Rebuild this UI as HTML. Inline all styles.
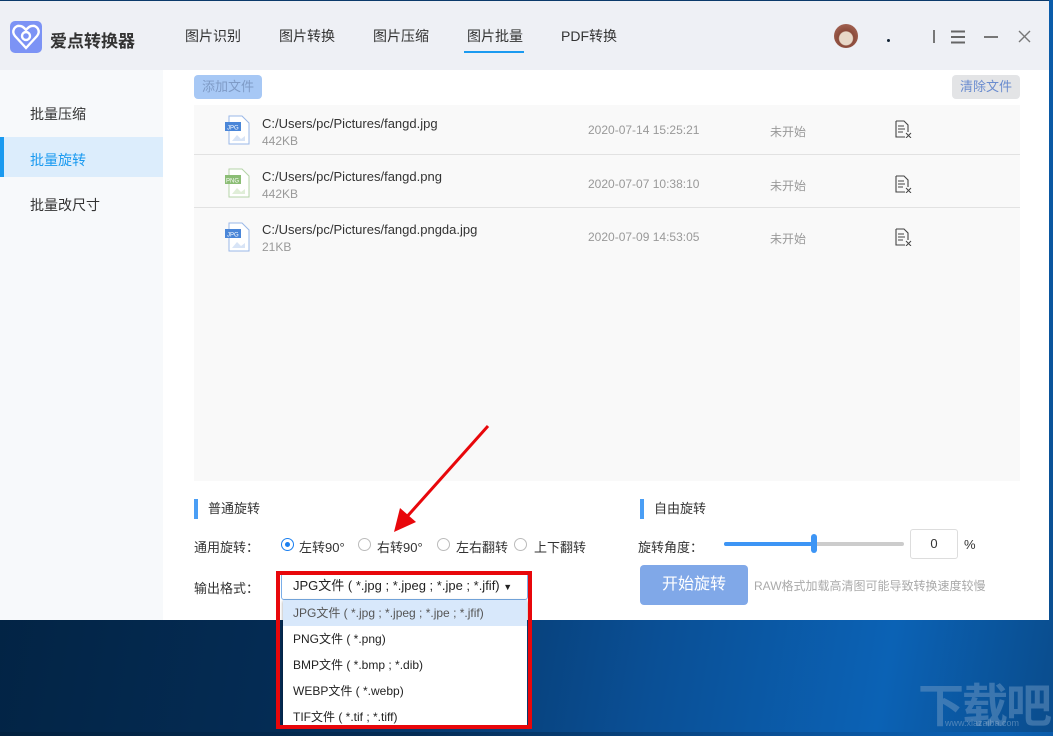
<!DOCTYPE html>
<html><head><meta charset="utf-8"><style>
*{margin:0;padding:0;box-sizing:border-box}
body{width:1053px;height:732px;overflow:hidden;position:relative;font-family:"Liberation Sans","Noto Sans CJK SC",sans-serif;font-size:13px;color:#333;
background:linear-gradient(100deg,#02213f 0%,#042c55 35%,#0a4f95 65%,#0b62b5 85%,#0a4c8c 100%)}
.app{position:absolute;left:0;top:0;width:1049px;height:620px;background:#fff}
.hdr{position:absolute;left:0;top:0;width:1049px;height:70px;background:#eef0f5;border-top:1px solid #0b3a6b}
.logo{position:absolute;left:10px;top:20px;width:32px;height:32px;border-radius:5px;background:#7c93f5}
.brand{position:absolute;left:50px;top:26px;font-size:17px;font-weight:bold;color:#333}
.tab{position:absolute;top:25px;font-size:14px;color:#333}
.tabline{position:absolute;left:464px;top:50px;width:60px;height:2px;background:#1a9af0}
.side{position:absolute;left:0;top:70px;width:163px;height:550px;background:#f7f9fb}
.si{position:absolute;left:30px;font-size:14px;color:#333}
.sel{position:absolute;left:0;top:67px;width:163px;height:40px;background:#dcedfc;border-left:4px solid #1a9af0}
.btn1{position:absolute;left:194px;top:75px;width:68px;height:24px;border-radius:4px;background:#a7c8f5;color:#7f9bc6;font-size:13px;text-align:center;line-height:24px}
.btn2{position:absolute;left:952px;top:75px;width:68px;height:24px;border-radius:4px;background:#e3e4e6;color:#6a8ccf;font-size:13px;text-align:center;line-height:24px}
.list{position:absolute;left:194px;top:105px;width:826px;height:376px;background:#f9f9f9}
.row{position:absolute;left:0;width:826px;height:50px;border-bottom:1px solid #e2e2e2}
.ic{position:absolute;left:30px;top:10px}
.fn{position:absolute;left:68px;top:11px;font-size:13px;color:#333}
.sz{position:absolute;left:68px;top:29px;font-size:12px;color:#999}
.dt{position:absolute;left:394px;top:18px;font-size:12px;color:#999}
.st{position:absolute;left:576px;top:18px;font-size:12px;color:#999}
.dl{position:absolute;left:700px;top:15px}
.sec{position:absolute;font-size:13px;color:#333;padding-left:10px;border-left:4px solid #4a9ef5;line-height:20px}
.lab{position:absolute;font-size:13px;color:#333}
.rad{position:absolute;width:13px;height:13px;border-radius:50%;border:1px solid #bbb;background:#fff}
.rad.on{border-color:#1a7ff0}
.rad.on::after{content:"";position:absolute;left:3px;top:3px;width:5px;height:5px;border-radius:50%;background:#1a7ff0}
.dd{position:absolute;left:276px;top:571px;width:256px;height:158px;border:4px solid #e8070b}
.sel2{position:absolute;left:281px;top:572px;width:247px;height:28px;border:1px solid #7aaee8;border-radius:3px;background:#fff;font-size:13px;line-height:26px;padding-left:11px;color:#222}
.menu{position:absolute;left:283px;top:600px;width:244px;height:125px;background:#fff;box-shadow:0 1px 3px rgba(0,0,0,.4)}
.mi{height:26px;line-height:26px;padding-left:10px;font-size:12px;color:#222}
</style></head><body>
<div class="app">
<div class="hdr">
 <div class="logo"><svg width="32" height="32" viewBox="0 0 32 32"><path d="M16 27 L5 15 C1 10 5 4 10 5 C13 5 15 8 16 9 C17 8 19 5 22 5 C27 4 31 10 27 15 Z" fill="none" stroke="#fff" stroke-width="2.4"/><circle cx="16" cy="15" r="4" fill="none" stroke="#fff" stroke-width="2.4"/></svg></div>
 <div class="brand">爱点转换器</div>
 <div class="tab" style="left:185px">图片识别</div>
 <div class="tab" style="left:279px">图片转换</div>
 <div class="tab" style="left:373px">图片压缩</div>
 <div class="tab" style="left:467px">图片批量</div>
 <div class="tab" style="left:561px">PDF转换</div>
 <div class="tabline"></div>
 <div style="position:absolute;left:834px;top:23px;width:24px;height:24px;border-radius:50%;background:radial-gradient(circle at 50% 60%,#e8d8c8 0 35%,#8a4a3a 40%,#b07060 100%)"></div>
 <div style="position:absolute;left:887px;top:38px;width:3px;height:3px;border-radius:50%;background:#123"></div>
 <div style="position:absolute;left:933px;top:29px;width:2px;height:13px;background:#777"></div>
 <svg style="position:absolute;left:950px;top:29px" width="16" height="14"><path d="M1 1.5H15M1 7H15M1 12.5H15" stroke="#666" stroke-width="2"/></svg>
 <div style="position:absolute;left:984px;top:35px;width:14px;height:2px;background:#777"></div>
 <svg style="position:absolute;left:1018px;top:29px" width="13" height="13"><path d="M1 1L12 12M12 1L1 12" stroke="#777" stroke-width="1.4"/></svg>
</div>
<div class="side">
 <div class="sel"></div>
 <div class="si" style="top:34px">批量压缩</div>
 <div class="si" style="top:80px;color:#1a9af0">批量旋转</div>
 <div class="si" style="top:125px">批量改尺寸</div>
</div>
<div class="btn1">添加文件</div>
<div class="btn2">清除文件</div>
<div class="list">
 <div class="row" style="top:0">
  <svg class="ic" width="26" height="30"><path d="M5 1H18L25 8V29H5Z" fill="#fff" stroke="#9ab8e8"/><rect x="1" y="7" width="16" height="9" fill="#4a86d8"/><text x="3" y="14.5" font-size="6" fill="#fff" font-family="Liberation Sans">JPG</text><path d="M8 26L13 20L17 24L21 21V26Z" fill="#d8e4f6"/></svg>
  <div class="fn">C:/Users/pc/Pictures/fangd.jpg</div><div class="sz">442KB</div>
  <div class="dt">2020-07-14 15:25:21</div><div class="st">未开始</div>
  <svg class="dl" width="18" height="18"><path d="M2 1H10L14 5V12M11 17H2V1" fill="none" stroke="#444" stroke-width="1.1"/><path d="M4 6H10M4 9H11M4 12H9M12 13L17 18M17 13L12 18" stroke="#444" stroke-width="1"/></svg>
 </div>
 <div class="row" style="top:50px;height:53px">
  <svg class="ic" width="26" height="30" style="top:13px"><path d="M5 1H18L25 8V29H5Z" fill="#fff" stroke="#b5d4a8"/><rect x="1" y="7" width="16" height="9" fill="#8bbd75"/><text x="2" y="14.5" font-size="6" fill="#fff" font-family="Liberation Sans">PNG</text><path d="M8 26L13 20L17 24L21 21V26Z" fill="#e0eed8"/></svg>
  <div class="fn" style="top:14px">C:/Users/pc/Pictures/fangd.png</div><div class="sz" style="top:32px">442KB</div>
  <div class="dt" style="top:22px">2020-07-07 10:38:10</div><div class="st" style="top:22px">未开始</div>
  <svg class="dl" width="18" height="18" style="top:20px"><path d="M2 1H10L14 5V12M11 17H2V1" fill="none" stroke="#444" stroke-width="1.1"/><path d="M4 6H10M4 9H11M4 12H9M12 13L17 18M17 13L12 18" stroke="#444" stroke-width="1"/></svg>
 </div>
 <div class="row" style="top:103px;height:53px;border-bottom:none">
  <svg class="ic" width="26" height="30" style="top:14px"><path d="M5 1H18L25 8V29H5Z" fill="#fff" stroke="#9ab8e8"/><rect x="1" y="7" width="16" height="9" fill="#4a86d8"/><text x="3" y="14.5" font-size="6" fill="#fff" font-family="Liberation Sans">JPG</text><path d="M8 26L13 20L17 24L21 21V26Z" fill="#d8e4f6"/></svg>
  <div class="fn" style="top:14px">C:/Users/pc/Pictures/fangd.pngda.jpg</div><div class="sz" style="top:32px">21KB</div>
  <div class="dt" style="top:22px">2020-07-09 14:53:05</div><div class="st" style="top:22px">未开始</div>
  <svg class="dl" width="18" height="18" style="top:20px"><path d="M2 1H10L14 5V12M11 17H2V1" fill="none" stroke="#444" stroke-width="1.1"/><path d="M4 6H10M4 9H11M4 12H9M12 13L17 18M17 13L12 18" stroke="#444" stroke-width="1"/></svg>
 </div>
</div>
<div class="sec" style="left:194px;top:499px">普通旋转</div>
<div class="lab" style="left:194px;top:537px">通用旋转：</div>
<div class="rad on" style="left:281px;top:538px"></div><div class="lab" style="left:299px;top:537px">左转90°</div>
<div class="rad" style="left:358px;top:538px"></div><div class="lab" style="left:377px;top:537px">右转90°</div>
<div class="rad" style="left:437px;top:538px"></div><div class="lab" style="left:456px;top:537px">左右翻转</div>
<div class="rad" style="left:514px;top:538px"></div><div class="lab" style="left:534px;top:537px">上下翻转</div>
<div class="lab" style="left:194px;top:578px">输出格式：</div>
<div class="sec" style="left:640px;top:499px">自由旋转</div>
<div class="lab" style="left:638px;top:537px">旋转角度：</div>
<div style="position:absolute;left:724px;top:542px;width:180px;height:4px;border-radius:2px;background:#ccc"></div>
<div style="position:absolute;left:724px;top:542px;width:90px;height:4px;border-radius:2px;background:#3d95f5"></div>
<div style="position:absolute;left:811px;top:534px;width:6px;height:19px;border-radius:3px;background:#3d95f5"></div>
<div style="position:absolute;left:910px;top:529px;width:48px;height:30px;border:1px solid #ddd;border-radius:3px;text-align:center;line-height:28px;font-size:13px">0</div>
<div class="lab" style="left:964px;top:537px">%</div>
<div style="position:absolute;left:640px;top:565px;width:108px;height:40px;border-radius:4px;background:#80a8e8;color:#fff;font-size:16px;text-align:center;line-height:40px">开始旋转</div>
<div class="lab" style="left:754px;top:577px;color:#aaa;font-size:12px">RAW格式加载高清图可能导致转换速度较慢</div>
</div>
<div class="sel2">JPG文件 ( *.jpg ; *.jpeg ; *.jpe ; *.jfif) <span style="font-size:9px">▼</span></div>
<div class="menu">
 <div class="mi" style="background:#d8e8fb;color:#555">JPG文件 ( *.jpg ; *.jpeg ; *.jpe ; *.jfif)</div>
 <div class="mi">PNG文件 ( *.png)</div>
 <div class="mi">BMP文件 ( *.bmp ; *.dib)</div>
 <div class="mi">WEBP文件 ( *.webp)</div>
 <div class="mi">TIF文件 ( *.tif ; *.tiff)</div>
</div>
<div class="dd"></div>
<svg style="position:absolute;left:390px;top:420px" width="110" height="115"><path d="M98 6L14 100" stroke="#e8070b" stroke-width="3"/><path d="M4 112L10 88L26 102Z" fill="#e8070b"/></svg>
<div style="position:absolute;left:918px;top:670px;font-size:46px;font-weight:bold;color:rgba(120,160,200,.45);letter-spacing:-2px">下载吧</div>
<div style="position:absolute;left:945px;top:718px;font-size:9px;color:rgba(150,180,210,.5)">www.xiazaiba.com</div>
</body></html>
